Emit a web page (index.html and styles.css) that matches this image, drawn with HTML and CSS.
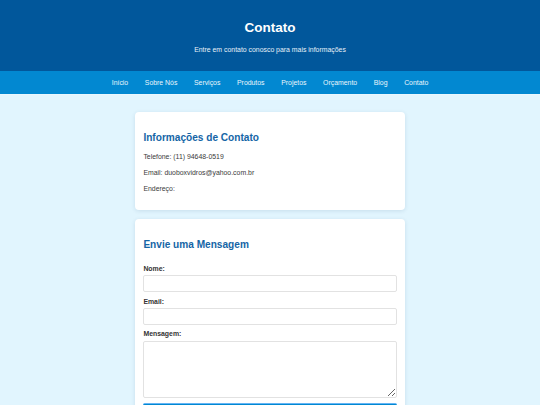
FILE: index.html
```html
<!DOCTYPE html>
<html lang="pt-BR">
<head>
<meta charset="utf-8">
<title>Contato</title>
<link rel="stylesheet" href="styles.css">
</head>
<body>
<header class="site-header">
  <h1 class="site-title">Contato</h1>
  <p class="site-subtitle">Entre em contato conosco para mais informações</p>
</header>
<nav class="site-nav">
  <a href="#">Início</a>
  <a href="#">Sobre Nós</a>
  <a href="#">Serviços</a>
  <a href="#">Produtos</a>
  <a href="#">Projetos</a>
  <a href="#">Orçamento</a>
  <a href="#">Blog</a>
  <a href="#">Contato</a>
</nav>
<main class="content">
  <section class="card">
    <h2 class="card-title">Informações de Contato</h2>
    <p class="info">Telefone: (11) 94648-0519</p>
    <p class="info">Email: duoboxvidros@yahoo.com.br</p>
    <p class="info">Endereço:</p>
  </section>
  <section class="card">
    <h2 class="card-title">Envie uma Mensagem</h2>
    <form class="form">
      <label class="label" for="nome">Nome:</label>
      <input class="field" id="nome" type="text">
      <label class="label" for="email">Email:</label>
      <input class="field" id="email" type="email">
      <label class="label" for="msg">Mensagem:</label>
      <textarea class="field area" id="msg"></textarea>
      <button class="submit" type="submit">Enviar</button>
    </form>
  </section>
</main>
</body>
</html>
```
FILE: styles.css
```css
* { box-sizing: border-box; }
html, body { margin: 0; padding: 0; }
body {
  background: #e1f5fe;
  font-family: "Liberation Sans", Arial, sans-serif;
  color: #3a3a3a;
}
.site-header {
  background: #01579b;
  color: #fff;
  text-align: center;
  padding: 19.5px 10px 17px;
  height: 71px;
}
.site-title {
  margin: 0;
  font-size: 13.5px;
  line-height: 16px;
  font-weight: bold;
}
.site-subtitle {
  margin: 10.5px 0 0;
  font-size: 6.9px;
  line-height: 8px;
  color: #e8f1f8;
}
.site-nav {
  background: #0288d1;
  height: 23px;
  display: flex;
  justify-content: center;
  align-items: center;
  box-shadow: 0 1px 1px rgba(255,255,255,0.25);
}
.site-nav a {
  color: #eaf6fc;
  text-decoration: none;
  font-size: 6.9px;
  line-height: 8px;
  padding: 0 8.3px;
}
.content {
  width: 270px;
  margin: 0 auto;
  padding-top: 18px;
}
.card {
  background: #fff;
  border-radius: 4px;
  box-shadow: 0 1px 4px rgba(0, 60, 100, 0.12);
  padding: 10px 8.4px;
  margin-bottom: 9px;
}
.card-title {
  color: #1565a6;
  font-size: 10.1px;
  line-height: 11.6px;
  font-weight: bold;
  margin: 9.5px 0 9.4px;
}
.info {
  font-size: 6.9px;
  line-height: 9px;
  margin: 7px 0;
}
.form {
  display: flex;
  flex-direction: column;
  padding-top: 5px;
}
.label {
  display: block;
  font-size: 6.9px;
  line-height: 8px;
  font-weight: bold;
  margin-bottom: 2.5px;
  color: #333;
}
.field {
  display: block;
  width: 100%;
  height: 16.7px;
  border: 1px solid #e2e2e2;
  border-radius: 2px;
  background: #fff;
  margin: 0 0 5.5px;
  padding: 3px;
  font-family: inherit;
  font-size: 6.9px;
}
.area {
  height: 56.7px;
  margin-bottom: 5px;
  resize: vertical;
}
.submit {
  display: block;
  width: 100%;
  height: 17px;
  border: none;
  border-top: 1px solid #64b5f6;
  border-radius: 2px;
  background: #0288d1;
  color: #fff;
  font-family: inherit;
  font-size: 6.9px;
}
```
